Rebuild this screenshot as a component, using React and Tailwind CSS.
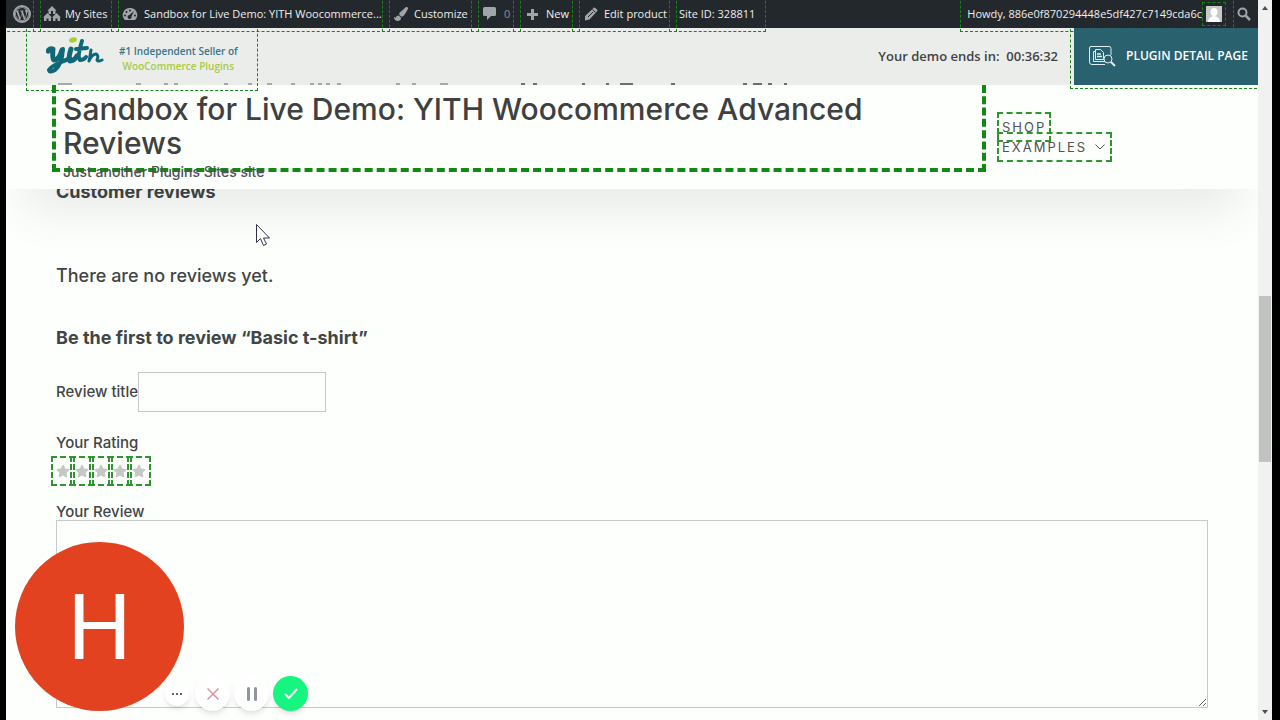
import { FaWordpressSimple, FaPaintBrush, FaStar } from 'react-icons/fa';

function BarLink({ className, children }) {
  return (
    <a href="#" className={`flex items-center h-7 shrink-0 whitespace-nowrap outline outline-1 outline-dashed outline-offset-3 outline-[#128512] ${className}`}>
      {children}
    </a>
  );
}

function SitesIcon() {
  return (
    <svg width="18" height="16" viewBox="0 0 18 16" fill="#a0a5aa" className="shrink-0">
      <path d="M9 0 13.500 4.500H12.500V8H5.500V4.500H4.500Z" />
      <path d="M4.500 7 9 11.500H8V15H5.500V12.500H3.500V15H1V11.500H0Z" />
      <path d="M13.500 7 18 11.500H17V15H14.500V12.500H12.500V15H10V11.500H9Z" />
      <path d="M8 5h2v3H8Z" fill="#23282d" />
    </svg>
  );
}

function GaugeIcon() {
  return (
    <svg width="16" height="15" viewBox="0 0 16 15" className="shrink-0">
      <path d="M8 1a7 7 0 0 0-6 11q.6 1 1.500 1h9q.9 0 1.500-1A7 7 0 0 0 8 1Z" fill="#a0a5aa" />
      <g fill="#23282d">
        <circle cx="8" cy="3.500" r="1" />
        <circle cx="4.500" cy="5" r="1" />
        <circle cx="3" cy="8.500" r="1" />
        <circle cx="13" cy="8.500" r="1" />
        <path d="M12 4 9.500 9.500A2 2 0 1 1 7.500 8Z" />
      </g>
    </svg>
  );
}

function CommentIcon() {
  return (
    <svg width="13" height="14" viewBox="0 0 13 14" fill="#a0a5aa" className="shrink-0">
      <path d="M1.500 0h10Q13 0 13 1.500v6Q13 9 11.500 9H8l-4 4V9H1.500Q0 9 0 7.500v-6Q0 0 1.500 0Z" />
    </svg>
  );
}

function PencilIcon() {
  return (
    <svg width="14" height="14" viewBox="0 0 14 14" className="shrink-0">
      <path d="M8.500 2 10 .500Q11 0 13.500 3 13.500 4 12.500 5L5.500 12.500 1 13.500 1 9Z" fill="#a0a5aa" />
      <path d="m8.500 2.500 3 3M4 10l5-5" stroke="#23282d" strokeWidth="1" />
    </svg>
  );
}

function YithLogo() {
  return (
    <svg width="58" height="38" viewBox="0 0 58 38" fill="none" stroke="#0f6878" strokeLinecap="round" strokeLinejoin="round">
      <path d="M2 15q2-3 5-2-1 10 1 11 5 0 8-10" strokeWidth="5" />
      <path d="M17 13q-1 15-8 21-5 3-6 0 1-3 12-8 6-2 9-4" strokeWidth="4" />
      <path d="M25 13q-3 9-1 12 4 0 7-5" strokeWidth="5" />
      <path d="M36 5q-5 16-2 19 4 0 6-3M30 13l11-1" strokeWidth="4" />
      <path d="M45 14q-1 7-2 11 3-7 7-7 3 1 1 6 1 2 5 0" strokeWidth="3" />
      <ellipse cx="27" cy="4" rx="4" ry="2.500" fill="#a6ce39" stroke="none" transform="rotate(-15 27 4)" />
    </svg>
  );
}

function DetailIcon() {
  return (
    <svg width="28" height="22" viewBox="0 0 28 22" fill="none" stroke="#dfeff1" strokeWidth="1">
      <path d="M17 19.500H4Q1.500 19.500 1.500 17V3Q1.500 1.500 3 1.500H21Q23 1.500 23 3.500V10" />
      <path d="M17 16.500H5.500V6.500H7" />
      <path d="M7.500 4.500h5l3 3v7h-8Z" />
      <path d="M9 9h4M9 11.500h5" strokeWidth="1.500" />
      <circle cx="20" cy="14" r="4" />
      <path d="m23 17 4 4" strokeWidth="2" />
    </svg>
  );
}

function AdminBar() {
  return (
    <nav className="relative z-20 flex h-7 bg-[#23282d] text-[#eee] font-['Open_Sans',sans-serif] text-[11px]">
      <BarLink className="w-[31px] justify-center">
        <span className="w-[18px] h-[18px] rounded-full border-2 border-[#a0a5aa] flex items-center justify-center">
          <FaWordpressSimple size={14} color="#a0a5aa" />
        </span>
      </BarLink>
      <BarLink className="w-[78px] gap-1 pl-1.5"><SitesIcon />My Sites</BarLink>
      <BarLink className="w-[271px] gap-1.5 pl-[7px]"><GaugeIcon />Sandbox for Live Demo: YITH Woocommerce...</BarLink>
      <BarLink className="w-[89px] gap-1.5 pl-2"><FaPaintBrush size={14} color="#a0a5aa" />Customize</BarLink>
      <BarLink className="w-[42px] gap-2 pl-2 text-[#8a8f94]"><CommentIcon />0</BarLink>
      <BarLink className="w-[59px] gap-2 pl-2.5">
        <svg width="11" height="11" viewBox="0 0 11 11" stroke="#a0a5aa" strokeWidth="3"><path d="M5.500 0v11M0 5.500h11" /></svg>
        New
      </BarLink>
      <BarLink className="w-[97px] gap-1.5 pl-2"><PencilIcon />Edit product</BarLink>
      <BarLink className="w-[89px] pl-1.5">Site ID: 328811</BarLink>
      <div className="flex-1" />
      <BarLink className="w-[266px] justify-end gap-1 pr-2">
        Howdy, 886e0f870294448e5df427c7149cda6c
        <span className="w-4 h-4 bg-[#c8c8c8] outline outline-1 outline-dashed outline-offset-3 outline-[#128512]">
          <svg width="16" height="16" viewBox="0 0 16 16" fill="#fff"><ellipse cx="8" cy="6" rx="3.500" ry="4" /><path d="M2 16q0-5 6-6 6 1 6 6Z" /></svg>
        </span>
      </BarLink>
      <button aria-label="Search" className="w-7 flex items-center justify-center">
        <svg width="14" height="14" viewBox="0 0 14 14" fill="none" stroke="#a0a5aa"><circle cx="5.500" cy="5.500" r="4" strokeWidth="2" /><path d="m8.500 8.500 4.500 4.500" strokeWidth="2.500" /></svg>
      </button>
    </nav>
  );
}

// slivers of the scrolled heading that stay visible above the site header
const slivers = [
  [58, 14], [136, 5], [164, 4], [174, 4], [224, 4], [248, 4], [267, 5], [291, 4], [310, 4], [318, 4], [326, 4], [337, 4],
  [396, 4], [412, 4], [440, 8], [521, 4], [533, 4], [582, 3], [606, 3], [620, 13], [671, 4], [743, 4], [753, 9], [768, 4], [784, 3],
];

function DemoBanner() {
  return (
    <div className="relative z-10 flex items-stretch h-[57px] bg-[#ebedeb]">
      <svg aria-hidden="true" className="absolute left-0 bottom-0" width="800" height="2">
        {slivers.map(([x, w]) => (
          <rect key={x} x={x - 6} y="0" width={w} height="2" fill={x > 500 ? '#6c706d' : '#a6a9a7'} />
        ))}
      </svg>
      <a href="#" className="ml-6 w-[224px] h-[59px] flex items-start gap-[15px] pt-2 pl-4 outline outline-1 outline-dashed outline-offset-3 outline-[#128512]">
        <YithLogo />
        <span className="pt-2 text-center font-['Open_Sans',sans-serif] font-semibold text-[10px] leading-[15px] whitespace-nowrap">
          <span className="block text-[#37758a]">#1 Independent Seller of</span>
          <span className="block text-[#a9cc3b]">WooCommerce Plugins</span>
        </span>
      </a>
      <div className="flex-1" />
      <p className="self-center mr-4 font-['Open_Sans',sans-serif] font-semibold text-[13px] text-[#3f4344] whitespace-pre">Your demo ends in:  00:36:32</p>
      <a href="#" className="w-[184px] flex items-center gap-2.5 pl-3.5 pb-0.5 bg-[#2a616f] text-white font-['Open_Sans',sans-serif] font-semibold text-xs whitespace-nowrap outline outline-1 outline-dashed outline-offset-3 outline-[#128512]">
        <DetailIcon />
        PLUGIN DETAIL PAGE
      </a>
    </div>
  );
}

function SiteHeader() {
  return (
    <header className="relative flex items-start h-[104px] bg-[#fdfffd] shadow-[0_40px_50px_-20px_rgba(0,0,0,0.09)]">
      <div className="ml-[46px] w-[934px] shrink-0">
        <h1 className="h-[87px] pt-[7px] pl-[7px] border-4 border-t-0 border-dashed border-[#128a12] text-[#3f4040] text-[30px] leading-[34px] font-medium">
          <a href="#">Sandbox for Live Demo: YITH Woocommerce Advanced<br />Reviews</a>
        </h1>
        <p className="-mt-2.5 pl-[11px] text-sm leading-5 font-medium text-[#505252]">Just another Plugins Sites site</p>
      </div>
      <nav className="ml-4 mt-8 flex flex-col items-start text-[13px] leading-5 tracking-[2px] text-[#505252]">
        <a href="#" className="outline outline-2 outline-dashed outline-offset-3 outline-[#2f962f]">SHOP</a>
        <a href="#" className="flex items-center gap-2 pr-0.5 outline outline-2 outline-dashed outline-offset-3 outline-[#2f962f]">
          EXAMPLES
          <svg width="10" height="6" viewBox="0 0 10 6" fill="none" stroke="#505252"><path d="m.500.500 4.500 4.500L9.500.500" /></svg>
        </a>
      </nav>
    </header>
  );
}

function Reviews() {
  return (
    <main className="px-[50px] -mt-[9px] text-[#414545]">
      <h2 className="text-lg leading-6 font-bold">Customer reviews</h2>
      <p className="mt-[60px] text-lg leading-6 font-medium">There are no reviews yet.</p>
      <h3 className="mt-[38px] text-lg leading-6 font-bold">Be the first to review “Basic t-shirt”</h3>
      <form className="mt-[22px] text-[15px] leading-5 font-medium">
        <div className="flex items-center">
          <label htmlFor="title">Review title</label>
          <input id="title" type="text" className="w-[188px] h-10 border border-[#c8cac8]" />
        </div>
        <p className="mt-[21px]">Your Rating</p>
        <div className="mt-2 flex h-5 gap-[5px]">
          {[1, 2, 3, 4, 5].map((n) => (
            <a key={n} href="#" aria-label={`${n} stars`} className="w-3.5 h-5 flex items-center outline outline-2 outline-dashed outline-offset-3 outline-[#2f962f]">
              <FaStar size={14} color="#c6c8c6" />
            </a>
          ))}
        </div>
        <label htmlFor="review" className="block mt-[23px] leading-4">Your Review</label>
        <textarea id="review" className="block w-full h-[188px] border border-[#c8cac8]" />
      </form>
    </main>
  );
}

function RecorderControls() {
  return (
    <div className="fixed left-[15px] bottom-[9px] z-30 flex items-end">
      <div className="w-[169px] h-[169px] pt-1 rounded-full bg-[#e2421f] text-white font-['Roboto',sans-serif] text-[90px] flex items-center justify-center">H</div>
      <div className="-ml-[19px] flex items-center gap-1">
        <button aria-label="More" className="w-6 h-6 mr-0.5 rounded-full bg-white shadow-md flex items-center justify-center gap-0.5">
          <span className="w-0.5 h-0.5 bg-[#666]" /><span className="w-0.5 h-0.5 bg-[#666]" /><span className="w-0.5 h-0.5 bg-[#666]" />
        </button>
        <button aria-label="Cancel" className="w-[35px] h-[35px] rounded-full bg-white shadow-md flex items-center justify-center">
          <svg width="12" height="12" viewBox="0 0 12 12" stroke="#d993a5" strokeWidth="1.500"><path d="m.500.500 11 11M11.500.500l-11 11" /></svg>
        </button>
        <button aria-label="Pause" className="w-[35px] h-[35px] rounded-full bg-white shadow-md flex items-center justify-center gap-1">
          <span className="w-[3px] h-3.5 rounded-full bg-[#9094a0]" /><span className="w-[3px] h-3.5 rounded-full bg-[#9094a0]" />
        </button>
        <button aria-label="Finish" className="w-[35px] h-[35px] rounded-full bg-[#17f581] shadow-md flex items-center justify-center">
          <svg width="14" height="12" viewBox="0 0 14 12" fill="none" stroke="#fff" strokeWidth="2"><path d="m1 6 4 4 8-9" /></svg>
        </button>
      </div>
    </div>
  );
}

export default function App() {
  return (
    <div className="h-screen flex bg-black pl-1.5 pr-2 overflow-hidden font-['Inter',sans-serif]">
      <div className="flex-1 min-w-0 bg-[#fdfffd] overflow-hidden">
        <AdminBar />
        <DemoBanner />
        <SiteHeader />
        <Reviews />
      </div>
      <div className="w-3.5 shrink-0 bg-[#f0f1f0] flex flex-col items-center py-1.5">
        <svg width="6" height="4" viewBox="0 0 6 4" fill="#505050"><path d="M0 4 3 0l3 4Z" /></svg>
        <div className="mt-[286px] w-3 h-[166px] bg-[#c1c3c1]" />
        <svg width="6" height="4" viewBox="0 0 6 4" fill="#505050" className="mt-auto"><path d="m0 0 3 4 3-4Z" /></svg>
      </div>
      <svg className="fixed left-[255px] top-[223px] z-30" width="17" height="25" viewBox="0 0 17 25" fill="#fff" stroke="#30304a"><path d="M1.500 1.500v18l4-4 3 7 3-1.500-3-6h6Z" /></svg>
      <RecorderControls />
    </div>
  );
}
